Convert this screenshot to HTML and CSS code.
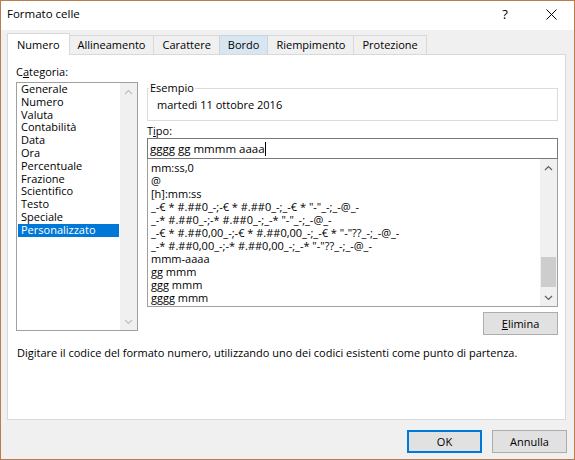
FILE: index.html
```html
<!DOCTYPE html>
<html>
<head>
<meta charset="UTF-8">
<title>Formato celle</title>
<link rel="stylesheet" href="styles.css">
</head>
<body>
<div class="window">
    <div class="titlebar">
        <span class="title">Formato celle</span>
        <span class="help">?</span>
        <span class="close">
            <svg width="11" height="11" viewBox="0 0 11 11"><path d="M0.5 0.5 L10.5 10.5 M10.5 0.5 L0.5 10.5" stroke="#000" stroke-width="1" fill="none"/></svg>
        </span>
    </div>
    <div class="main">
        <div class="tabs">
            <div class="tab active">Numero</div>
            <div class="tab">Allineamento</div>
            <div class="tab">Carattere</div>
            <div class="tab hover">Bordo</div>
            <div class="tab">Riempimento</div>
            <div class="tab">Protezione</div>
        </div>
        <div class="panel">
            <div class="cols">
                <div class="left">
                    <div class="label">C<u>a</u>tegoria:</div>
                    <div class="listbox cat">
                        <ul class="items">
                            <li>Generale</li>
                            <li>Numero</li>
                            <li>Valuta</li>
                            <li>Contabilità</li>
                            <li>Data</li>
                            <li>Ora</li>
                            <li>Percentuale</li>
                            <li>Frazione</li>
                            <li>Scientifico</li>
                            <li>Testo</li>
                            <li>Speciale</li>
                            <li class="selected">Personalizzato</li>
                        </ul>
                        <div class="scrollbar disabled">
                            <div class="arrow"><svg width="9" height="6" viewBox="0 0 9 6"><path d="M1 5 L4.5 1.5 L8 5" stroke="currentColor" stroke-width="1.2" fill="none"/></svg></div>
                            <div class="track"></div>
                            <div class="arrow"><svg width="9" height="6" viewBox="0 0 9 6"><path d="M1 1 L4.5 4.5 L8 1" stroke="currentColor" stroke-width="1.2" fill="none"/></svg></div>
                        </div>
                    </div>
                </div>
                <div class="right">
                    <div class="sample">
                        <span class="legend">Esempio</span>
                        <div class="sample-text">martedì 11 ottobre 2016</div>
                    </div>
                    <div class="label tipo">T<u>i</u>po:</div>
                    <div class="input">gggg gg mmmm aaaa<span class="caret"></span></div>
                    <div class="listbox codes">
                        <ul class="items">
                            <li>mm:ss,0</li>
                            <li>@</li>
                            <li>[h]:mm:ss</li>
                            <li>_-€ * #.##0_-;-€ * #.##0_-;_-€ * "-"_-;_-@_-</li>
                            <li>_-* #.##0_-;-* #.##0_-;_-* "-"_-;_-@_-</li>
                            <li>_-€ * #.##0,00_-;-€ * #.##0,00_-;_-€ * "-"??_-;_-@_-</li>
                            <li>_-* #.##0,00_-;-* #.##0,00_-;_-* "-"??_-;_-@_-</li>
                            <li>mmm-aaaa</li>
                            <li>gg mmm</li>
                            <li>ggg mmm</li>
                            <li>gggg mmm</li>
                        </ul>
                        <div class="scrollbar">
                            <div class="arrow"><svg width="9" height="6" viewBox="0 0 9 6"><path d="M1 5 L4.5 1.5 L8 5" stroke="currentColor" stroke-width="1.2" fill="none"/></svg></div>
                            <div class="track"><div class="thumb"></div></div>
                            <div class="arrow"><svg width="9" height="6" viewBox="0 0 9 6"><path d="M1 1 L4.5 4.5 L8 1" stroke="currentColor" stroke-width="1.2" fill="none"/></svg></div>
                        </div>
                    </div>
                    <div class="actions">
                        <button class="btn"><u>E</u>limina</button>
                    </div>
                </div>
            </div>
            <p class="hint">Digitare il codice del formato numero, utilizzando uno dei codici esistenti come punto di partenza.</p>
        </div>
        <div class="footer">
            <button class="btn ok">OK</button>
            <button class="btn">Annulla</button>
        </div>
    </div>
</div>
</body>
</html>
```

FILE: styles.css
```css
*{
    box-sizing: border-box;
}
body{
    margin: 0;
    font-family: "Open Sans", "Liberation Sans", sans-serif;
    font-size: 11px;
    color: #000;
}
.window{
    width: 575px;
    height: 460px;
    border: 1px solid #bd7a4a;
    background: #f0f0f0;
    display: flex;
    flex-direction: column;
}
.titlebar{
    height: 29px;
    flex-shrink: 0;
    background: #fff;
    display: flex;
    align-items: center;
}
.title{
    flex: 1;
    padding-left: 6px;
    margin-top: -4px;
    font-size: 11.5px;
}
.help, .close{
    width: 46px;
    height: 29px;
    display: flex;
    align-items: center;
    justify-content: center;
}
.help{
    font-size: 13px;
    margin-top: -4px;
}
.close svg{
    margin-top: -2px;
}
.main{
    flex: 1;
    padding: 3px 8px 0 6px;
    display: flex;
    flex-direction: column;
}
.tabs{
    display: flex;
    align-items: flex-end;
    height: 21px;
    position: relative;
    z-index: 1;
}
.tab{
    height: 19px;
    line-height: 18px;
    padding: 0 8px;
    border: 1px solid #d9d9d9;
    border-bottom: 0;
    margin-right: -1px;
    background: #f0f0f0;
}
.tab.active{
    height: 22px;
    line-height: 21px;
    padding: 0 9px;
    margin-bottom: -1px;
    background: #fff;
}
.tab.hover{
    background: #d8e6f2;
    border-color: #c5d5e4;
    position: relative;
}
.panel{
    height: 366px;
    background: #fff;
    border: 1px solid #d9d9d9;
    padding: 9px 7px 0 8px;
}
.cols{
    display: flex;
    gap: 9px;
}
.left{
    width: 122px;
}
.right{
    width: 411px;
}
.label{
    height: 15px;
    line-height: 15px;
}
.listbox{
    display: flex;
    border: 1px solid #a0a0a0;
    background: #fff;
}
.items{
    flex: 1;
    margin: 0;
    padding: 0;
    list-style: none;
    white-space: nowrap;
}
.cat{
    margin-top: 3px;
    height: 249px;
}
.cat .items{
    padding: 0 1px;
}
.cat li{
    height: 12.8px;
    line-height: 12.8px;
    padding-left: 3px;
}
.cat li.selected{
    background: #0078d7;
    color: #fff;
}
.scrollbar{
    width: 17px;
    background: #f0f0f0;
    display: flex;
    flex-direction: column;
    color: #606060;
}
.scrollbar.disabled{
    color: #c0c0c0;
}
.arrow{
    height: 17px;
    display: flex;
    align-items: center;
    justify-content: center;
}
.track{
    flex: 1;
}
.thumb{
    margin: 81px 1px 0;
    height: 30px;
    background: #cdcdcd;
}
.sample{
    position: relative;
    margin-top: 24px;
    height: 33px;
    border: 1px solid #dcdcdc;
}
.legend{
    position: absolute;
    left: 1px;
    top: -9px;
    padding: 0 1px;
    line-height: 15px;
    background: #fff;
}
.sample-text{
    padding: 8px 0 0 9px;
    line-height: 15px;
}
.tipo{
    margin-top: 2px;
}
.input{
    height: 21px;
    border: 1px solid #7a7a7a;
    padding-left: 2px;
    line-height: 19px;
    font-size: 11.5px;
    position: relative;
    z-index: 1;
}
.caret{
    display: inline-block;
    width: 1px;
    height: 14px;
    background: #000;
    vertical-align: -3px;
}
.codes{
    margin-top: -1px;
    height: 149px;
}
.codes .items{
    padding-top: 2px;
}
.codes li{
    height: 13px;
    line-height: 13px;
    padding-left: 3px;
}
.actions{
    display: flex;
    justify-content: flex-end;
    margin-top: 5px;
}
.btn{
    width: 75px;
    height: 23px;
    padding: 0;
    border: 1px solid #adadad;
    background: #e1e1e1;
    font: inherit;
    color: #000;
}
.hint{
    margin: 10px 0 0 1px;
    line-height: 15px;
}
.footer{
    display: flex;
    justify-content: flex-end;
    gap: 10px;
    padding-top: 10px;
    margin-right: -1px;
}
.btn.ok{
    border-color: #0078d7;
    box-shadow: inset 0 0 0 1px #0078d7;
}
```
